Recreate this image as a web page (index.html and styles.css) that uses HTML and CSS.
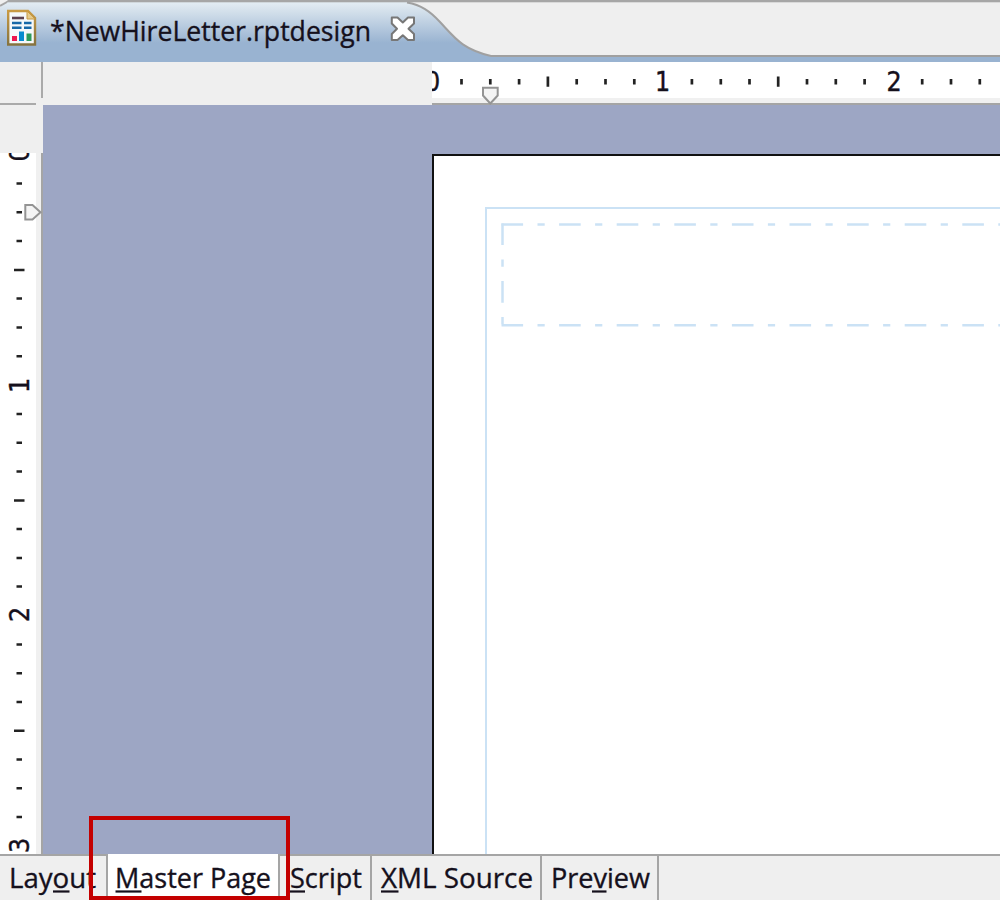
FILE: index.html
```html
<!DOCTYPE html>
<html lang="en">
<head>
<meta charset="utf-8">
<title>NewHireLetter.rptdesign</title>
<link rel="stylesheet" href="styles.css">
</head>
<body>
<div class="editor">
  <header class="tabbar">
    <svg class="art" width="1000" height="62" viewBox="0 0 1000 62">
      <defs>
        <linearGradient id="tabfill" x1="0" y1="0" x2="0" y2="1">
          <stop offset="0" stop-color="#e4edf4"/>
          <stop offset=".13" stop-color="#d6e2ec"/>
          <stop offset=".4" stop-color="#b8cbdf"/>
          <stop offset=".68" stop-color="#99b3d1"/>
          <stop offset="1" stop-color="#99b3d1"/>
        </linearGradient>
        <linearGradient id="paper" x1="0" y1="0" x2="0" y2="1">
          <stop offset="0" stop-color="#c99a43"/>
          <stop offset="1" stop-color="#86733f"/>
        </linearGradient>
      </defs>
      <rect width="1000" height="62" fill="#efefef"/>
      <path d="M0 2H406C421 5 430 11 440 22C455 38 462 49 491 56.500H1000V62H0Z" fill="url(#tabfill)"/>
      <rect width="1000" height="2.300" fill="#a6a6a6"/>
      <path d="M407 2.500C421 5 430 11 440 22C455 38 462 49 491 56H1000" fill="none" stroke="#a0a0a0" stroke-width="2"/>
      <path d="M0 0H8L0 7Z" fill="#efefef"/>
      <path d="M0 6L7 2" stroke="#a6a6a6" stroke-width="2"/>
      <path d="M8.200 11H28L35 18V44.500H8.200Z" fill="#f5f8fa" stroke="url(#paper)" stroke-width="2.400"/>
      <path d="M27 11L35 19H27Z" fill="#e5cb8d" stroke="#c99a43"/>
      <path d="M12 18H24" stroke="#5c414f" stroke-width="2.600"/>
      <path d="M12 23H21.500M24 23H31.500M12 27.700H21.500M24 27.700H31.500" stroke="#1768a8" stroke-width="2.500"/>
      <path d="M12 36H17V41H12Z" fill="#ed164f"/>
      <path d="M19 31.500H24V41H19Z" fill="#078bd0"/>
      <path d="M26.500 33.500H31.500V41H26.500Z" fill="#2c9b5b"/>
      <text class="label" x="50" y="41" textLength="321" lengthAdjust="spacingAndGlyphs">*NewHireLetter.rptdesign</text>
      <path d="M391.800 17.500H397.500L402.800 22.500L408 17.500H414V23.500L408.500 28.800L414 34V40H408L402.800 35.200L397.500 40H391.800V34L397 28.800L391.800 23.500Z" fill="#fff" stroke="#777" stroke-width="2" stroke-linejoin="round"/>
    </svg>
  </header>

  <div class="top-row">
    <div class="corner">
      <div class="corner-box"></div>
    </div>
    <div class="ruler-blank"></div>
    <div class="ruler-h">
      <svg class="art" width="568" height="44" viewBox="0 0 568 44">
        <g stroke="#222" stroke-width="2.700">
          <path d="M29.500 17V22.500M58.300 17V22.500M87.100 17V22.500M144.700 17V22.500M173.500 17V22.500M202.300 17V22.500M259.900 17V22.500M288.800 17V22.500M317.500 17V22.500M375 17V22.500M403.800 17V22.500M432.600 17V22.500M490.200 17V22.500M519 17V22.500M547.800 17V22.500"/>
          <path d="M115.900 14.600V24.700M346.200 14.600V24.700"/>
        </g>
        <text class="num" x="0.500" y="29.300">0</text>
        <text class="num" x="230.700" y="29.300">1</text>
        <text class="num" x="462" y="29.300">2</text>
        <path d="M51 25.700H65.700V33.500L58.300 41.500L51 33.500Z" fill="#f4f4f4" stroke="#949494" stroke-width="2"/>
      </svg>
    </div>
  </div>

  <div class="work">
    <aside class="side">
      <div class="side-blank"></div>
      <div class="ruler-v">
        <svg class="art" width="43" height="701" viewBox="0 0 43 701">
          <g stroke="#222" stroke-width="2.500">
            <path d="M16.500 30.500H22M16.500 59.200H22M16.500 88H22M16.500 145.500H22M16.500 174.500H22M16.500 203.300H22M16.500 261H22M16.500 289.700H22M16.500 318.500H22M16.500 376H22M16.500 405H22M16.500 433.600H22M16.500 491.400H22M16.500 520.200H22M16.500 549H22M16.500 606.500H22M16.500 635.300H22M16.500 664H22"/>
            <path d="M14 117H24.500M14 347.500H24.500M14 577.800H24.500"/>
          </g>
          <text class="num" transform="translate(29 1) rotate(-90)">0</text>
          <text class="num" transform="translate(29 232.500) rotate(-90)">1</text>
          <text class="num" transform="translate(29 461.500) rotate(-90)">2</text>
          <text class="num" transform="translate(29 692.500) rotate(-90)">3</text>
          <path d="M25.300 52V66.500H32.500L40.500 59.200L32.500 52Z" fill="#f4f4f4" stroke="#949494" stroke-width="2"/>
        </svg>
      </div>
    </aside>
    <main class="canvas">
      <div class="page">
        <div class="margin-box">
          <svg class="art" width="513" height="646" viewBox="0 0 513 646">
            <g fill="none" stroke="#cbe2f5" stroke-width="2.500">
              <path d="M14.500 15.500H520M14.500 116.200H520" stroke-dasharray="21.600 14.400 7.200 14.400"/>
              <path d="M15.500 14.500V117" stroke-dasharray="21.600 14.400 7.200 14.400"/>
            </g>
          </svg>
        </div>
      </div>
    </main>
  </div>

  <nav class="views">
    <div class="view layout"><svg class="art" width="106" height="43"><text class="label" x="9" y="32" textLength="87" lengthAdjust="spacingAndGlyphs">Layout</text><path class="key" d="M53 35.500H69.500"/></svg></div>
    <div class="view master"><svg class="art" width="170" height="43"><text class="label" x="7" y="32" textLength="156" lengthAdjust="spacingAndGlyphs">Master Page</text><path class="key" d="M7.500 35.500H33.500"/></svg></div>
    <div class="view script"><svg class="art" width="89" height="43"><text class="label" x="10" y="32" textLength="72" lengthAdjust="spacingAndGlyphs">Script</text><path class="key" d="M10 35.500H25"/></svg></div>
    <div class="view xml"><svg class="art" width="168" height="43"><text class="label" x="9" y="32" textLength="152" lengthAdjust="spacingAndGlyphs">XML Source</text><path class="key" d="M9 35.500H26.500"/></svg></div>
    <div class="view preview"><svg class="art" width="115" height="43"><text class="label" x="9" y="32" textLength="99" lengthAdjust="spacingAndGlyphs">Preview</text><path class="key" d="M50 35.500H64.500"/></svg></div>
  </nav>
  <div class="callout"></div>
</div>
</body>
</html>
```
FILE: styles.css
```css
* { box-sizing: border-box; }
body { margin: 0; background: #fff; }
.editor {
  position: relative;
  width: 1000px;
  height: 900px;
  overflow: hidden;
  display: flex;
  flex-direction: column;
  background: #efefef;
}
.art { display: block; }
.label {
  font-family: "Open Sans", "Noto Sans", sans-serif;
  font-size: 27.5px;
  fill: #15101c;
  stroke: #15101c;
  stroke-width: 0.350px;
}
.num {
  font-family: "DejaVu Sans Condensed", "DejaVu Sans", sans-serif;
  font-stretch: condensed;
  font-size: 26.5px;
  fill: #15101c;
  stroke: #15101c;
  stroke-width: 0.400px;
  text-anchor: middle;
}
.tabbar { flex: 0 0 62px; }
.top-row { flex: 0 0 43px; display: flex; }
.corner { width: 43px; background: #efefef; }
.corner-box {
  width: 43px;
  height: 43px;
  background:
    linear-gradient(#aaa, #aaa) right 0 top 0 / 2px 36px no-repeat,
    linear-gradient(#aaa, #aaa) left 0 bottom 0 / 36px 2px no-repeat;
}
.ruler-blank { width: 389px; background: #efefef; }
.ruler-h {
  width: 568px;
  height: 43px;
  overflow: hidden;
  background: linear-gradient(#fff 0 36px, #f0f0f0 36px 40.5px, #a5a5a5 41px 43px);
}
.work { flex: 0 0 749px; display: flex; }
.side { width: 43px; display: flex; flex-direction: column; }
.side-blank { height: 48px; background: #efefef; }
.ruler-v {
  height: 701px;
  overflow: hidden;
  background: linear-gradient(90deg, #fff 0 36px, #f0f0f0 36px 40.5px, #a5a5a5 41px 43px);
}
.canvas {
  width: 957px;
  height: 749px;
  padding: 49px 0 0 389px;
  background: #9da6c4;
}
.page {
  height: 700px;
  padding: 51px 0 0 51px;
  border: solid #111;
  border-width: 2px 0 0 2px;
  background: #fff;
}
.margin-box {
  height: 647px;
  border: solid #cbe2f5;
  border-width: 2px 0 0 2px;
  overflow: hidden;
}
.views {
  flex: 0 0 46px;
  height: 46px;
  display: flex;
  border-top: 2px solid #a5a5a5;
  background: #efefef;
}
.view { height: 44px; border-right: 2px solid #a5a5a5; overflow: hidden; }
.layout { width: 108px; }
.master {
  width: 172px;
  height: 46px;
  margin-top: -2px;
  padding-top: 2px;
  background: #fff;
}
.script { width: 92px; }
.xml { width: 170px; }
.preview { width: 117px; }
.key { stroke: #15101c; stroke-width: 2.200; }
.callout {
  position: absolute;
  left: 89px;
  top: 816px;
  width: 201px;
  height: 84px;
  border: 4.500px solid #c40000;
}
```
